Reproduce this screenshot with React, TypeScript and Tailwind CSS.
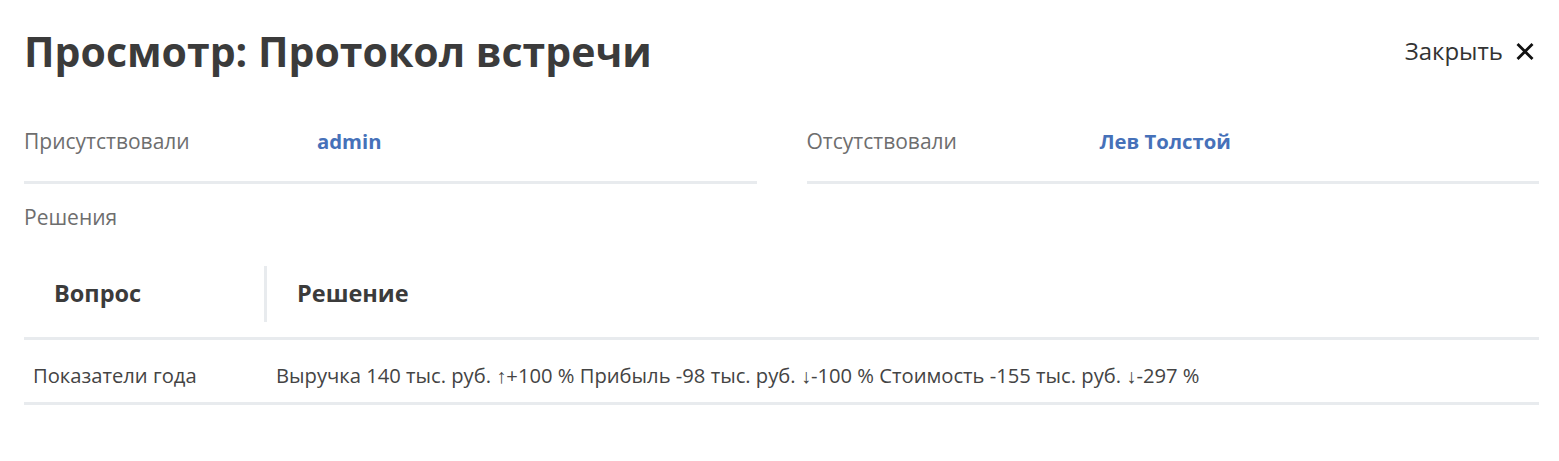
import React from "react";

const font = { fontFamily: '"Open Sans", "Noto Sans", sans-serif' };

export default function App() {
  return (
    <div className="w-[1559px] h-[461px] bg-white pl-6 pr-[20px] pt-[24px]" style={font}>
      <div className="flex items-center justify-between">
        <h1 className="text-[41px] leading-[54px] font-bold text-[#3b3b3b]">Просмотр: Протокол встречи</h1>
        <button className="flex items-center gap-[13px] text-[24px] leading-[32px] text-[#333] mr-[5px]">
          <span>Закрыть</span>
          <svg width="18" height="17" viewBox="0 0 18 17" fill="none" stroke="#111" strokeWidth="2.8" strokeLinecap="square">
            <path d="M2.5 2L15.5 15M15.5 2L2.5 15" />
          </svg>
        </button>
      </div>

      <div className="grid grid-cols-2 gap-[50px]">
        <div className="flex items-center pt-[49px] pb-[26px] border-b-[3px] border-[#e8ebee]">
          <div className="w-[293px] text-[21px] leading-[28px] text-[#6e6e6e]">Присутствовали</div>
          <div className="text-[20.3px] leading-[28px] font-bold text-[#4671b9]">admin</div>
        </div>
        <div className="flex items-center pt-[49px] pb-[26px] border-b-[3px] border-[#e8ebee]">
          <div className="w-[293px] text-[21px] leading-[28px] text-[#6e6e6e]">Отсутствовали</div>
          <div className="text-[20.3px] leading-[28px] font-bold text-[#4671b9]">Лев Толстой</div>
        </div>
      </div>

      <div className="mt-[19px] text-[21px] leading-[28px] text-[#6e6e6e]">Решения</div>

      <div className="mt-[35px]">
        <div className="flex border-b-[3px] border-[#e8ebee] pb-[15px]">
          <div className="w-[243px] h-[56px] flex items-center pl-[30px] text-[23.5px] font-bold text-[#3b3b3b] border-r-[3px] border-[#e8ebee]">Вопрос</div>
          <div className="flex-1 flex items-center pl-[30px] text-[23.5px] font-bold text-[#3b3b3b]">Решение</div>
        </div>
        <div className="flex pt-[21px] pb-[13px] border-b-[3px] border-[#e8ebee] text-[20.2px] leading-[28px] text-[#444]">
          <div className="w-[244px] pl-[9px]">Показатели года</div>
          <div className="flex-1 pl-[8px]">Выручка 140 тыс. руб. ↑+100 % Прибыль -98 тыс. руб. ↓-100 % Стоимость -155 тыс. руб. ↓-297 %</div>
        </div>
      </div>
    </div>
  );
}
